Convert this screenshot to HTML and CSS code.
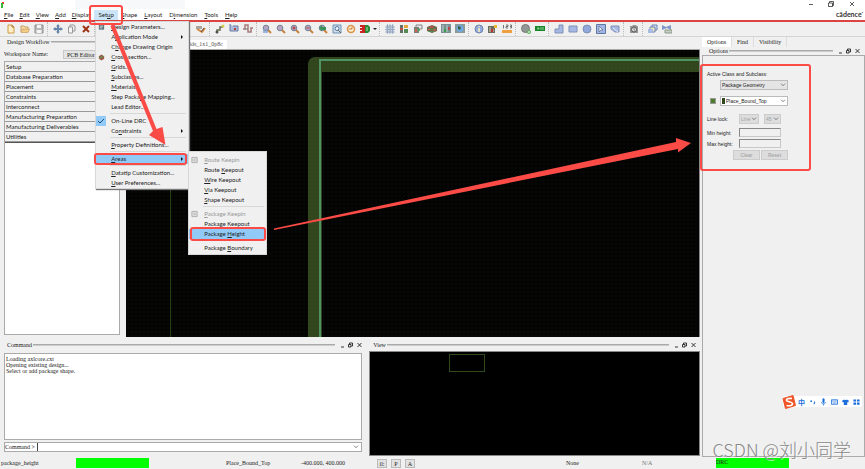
FILE: index.html
```html
<!DOCTYPE html>
<html lang="en">
<head>
<meta charset="utf-8">
<title>PCB Editor</title>
<link rel="stylesheet" href="styles.css">
</head>
<body>
<svg class="defs" aria-hidden="true">
  <symbol id="i-check" viewBox="0 0 8 8"><path d="M1 4l2 2 4-4" fill="none" stroke="#1f4e79"/></symbol>
  <symbol id="i-chev" viewBox="0 0 6 4"><path d="M1 .7l2 2 2-2" fill="none" stroke="#666" stroke-width=".8"/></symbol>
  <symbol id="i-win" viewBox="0 0 22 6"><path d="M1 5h3M9.500 2V1h3v3h-1" fill="none" stroke="#222" stroke-width=".9"/><path d="M8.500 2.500h2.500V5H8.500zM17.500 1l4 4M21.500 1l-4 4" fill="none" stroke="#222" stroke-width=".9"/></symbol>
  <symbol id="i-lens" viewBox="0 0 10 10"><path d="M6 6l3 3" stroke="#c8833b" stroke-width="2"/><circle cx="4" cy="4" r="2.800" fill="#b9a6c4" stroke="#75818f"/></symbol>
  <symbol id="i-keep" viewBox="0 0 8 8"><path d="M1 1h6v6H1z" fill="#ddd" stroke="#aaa"/><path d="M3 3h2v2H3z" fill="#bbb"/></symbol>
</svg>

<header>
  <div class="titlebar">
    <svg class="appmark" viewBox="0 0 4 8"><path d="M1 2h2v2H1z" fill="#e33"/><path d="M0 3h2v5H0z" fill="#3b3"/></svg>
    <span class="titleblur"></span>
    <svg class="wincontrols" viewBox="0 0 50 8"><path d="M2 4.500h4M22.500 3V1.500h4v4H25M21.500 3h4v3.500h-4zM43 2l4 4M47 2l-4 4" fill="none" stroke="#333" stroke-width=".8"/></svg>
  </div>
  <nav class="menubar">
    <button><u>F</u>ile</button><button><u>E</u>dit</button><button><u>V</u>iew</button><button><u>A</u>dd</button><button><u>D</u>isplay</button>
    <div class="menuhost">
      <button class="active">Set<u>u</u>p</button>
      <div class="popup setup">
        <button><svg class="mi" viewBox="0 0 8 8"><path d="M1 1h6v6H1z" fill="#577177"/><path d="M2 3h4M2 5h3" stroke="#d7e6e8"/></svg><u>D</u>esign Parameters...</button>
        <button>A<u>p</u>plication Mode<span class="arrow"></span></button>
        <button>C<u>h</u>ange Drawing Origin</button>
        <button><svg class="mi" viewBox="0 0 8 8"><path d="M1 3l3-2 3 2v3L4 8 1 6z" fill="#a25246"/><path d="M1 4l3 1 3-2M2 6l3-4" stroke="#5c9a5a" fill="none"/></svg><u>C</u>ross-section...</button>
        <button><u>G</u>rids...</button>
        <button><u>S</u>ubclasses...</button>
        <button><u>M</u>aterials...</button>
        <button>Step Packa<u>g</u>e Mapping...</button>
        <button>Lead Editor...</button>
        <hr>
        <button><svg class="mi checked"><use href="#i-check"/></svg>On-Line DRC</button>
        <button>Co<u>n</u>straints<span class="arrow"></span></button>
        <hr>
        <button><u>P</u>roperty Definitions...</button>
        <hr>
        <div class="subhost">
          <button class="hot marked"><u>A</u>reas<span class="arrow"></span></button>
          <div class="popup areas">
            <button disabled><svg class="mi"><use href="#i-keep"/></svg><u>R</u>oute Keepin</button>
            <button>Route <u>K</u>eepout</button>
            <button><u>W</u>ire Keepout</button>
            <button><u>V</u>ia Keepout</button>
            <button><u>S</u>hape Keepout</button>
            <hr>
            <button disabled><svg class="mi"><use href="#i-keep"/></svg><u>P</u>ackage Keepin</button>
            <button>P<u>a</u>ckage Keepout</button>
            <button class="hot marked">Package <u>H</u>eight</button>
            <hr>
            <button>Package <u>B</u>oundary</button>
          </div>
        </div>
        <hr>
        <button><u>D</u>atatip Customization...</button>
        <button><u>U</u>ser Preferences...</button>
        <svg class="menuarrow" viewBox="0 0 60 126"><path d="M14.500 3L18 1L60.500 106L66.500 104L69.500 122L53 112L57 108z" fill="#fa4b46"/></svg>
      </div>
    </div>
    <button><u>S</u>hape</button><button><u>L</u>ayout</button><button>D<u>i</u>mension</button><button><u>T</u>ools</button><button><u>H</u>elp</button>
    <span class="brand">cādence<sup>·</sup></span>
  </nav>
  <div class="toolbar">
    <div class="group">
      <svg viewBox="0 0 10 10"><path d="M2 1h4l2 2v6H2z" fill="#fff0c8" stroke="#cf9a45"/><path d="M6 1v2h2" fill="none" stroke="#a87535"/></svg>
      <svg viewBox="0 0 10 10"><path d="M1 8V2h3l1 1h3v2" fill="#f7dfad" stroke="#c79d60"/><path d="M1 8.500L2.500 5H9.500L8 8.500z" fill="#f3cc85" stroke="#c79d60" stroke-width=".7"/></svg>
      <svg viewBox="0 0 10 10"><path d="M1 1h8v8H1z" fill="#b9b9b9" stroke="#8f8f8f"/><path d="M3 1h4v3H3zM2.500 6h5v3h-5z" fill="#f4f4f4"/></svg>
    </div>
    <div class="group">
      <svg viewBox="0 0 10 10"><path d="M5 0l2 2.500H6V4h1.500V3L10 5 7.500 7V6H6v1.500h1L5 10 3 7.500h1V6H2.500v1L0 5l2.500-2v1H4V2.500H3z" fill="#6685a8"/></svg>
      <svg viewBox="0 0 10 10"><path d="M3 1h4l1 1v5H3z" fill="#eee" stroke="#999"/><path d="M1.500 3h4v6h-4z" fill="#f7f7f7" stroke="#999"/></svg>
      <svg viewBox="0 0 10 10"><path d="M2 2l6 6M8 2L2 8" stroke="#9c3414" stroke-width="2"/></svg>
    </div>
    <div class="group covered">
      <svg viewBox="0 0 10 10"><path d="M0 2h6v3H0z" fill="#a9a4a2"/><path d="M1 5l5 3 3-4" fill="none" stroke="#d28b43" stroke-width="2"/><path d="M5 8l3-4" stroke="#5a4c44"/></svg>
    </div>
    <div class="group">
      <svg viewBox="0 0 10 10"><path d="M2 8V6h3V3h3" fill="none" stroke="#676b50" stroke-width="1.500"/><circle cx="2" cy="8" r="1.500" fill="#4c5148"/><circle cx="8" cy="2" r="1.500" fill="#d5cc47"/></svg>
      <svg viewBox="0 0 10 10"><path d="M1 0v7h8V2H4" fill="#adbbdc" stroke="#6b7da3"/><path d="M5 4l2 2M7 4L5 6" stroke="#b74141"/></svg>
      <svg viewBox="0 0 10 10"><path d="M0 5h2V1h3v7h3V4h2" fill="none" stroke="#a57979" stroke-width="1.500"/><path d="M2 5h3" stroke="#777"/></svg>
    </div>
    <div class="group">
      <svg viewBox="0 0 10 10"><use href="#i-lens"/><path d="M1 5h5v4H1z" fill="#7f9ccd" opacity=".7"/></svg>
      <svg viewBox="0 0 10 10"><use href="#i-lens"/></svg>
      <svg viewBox="0 0 10 10"><use href="#i-lens"/><path d="M2.500 4h3M4 2.500v3" stroke="#b32929"/></svg>
      <svg viewBox="0 0 10 10"><use href="#i-lens"/><path d="M2.500 4h3" stroke="#a44"/></svg>
      <svg viewBox="0 0 10 10"><use href="#i-lens"/><path d="M1 4l3-3v2h4v3H4v1z" fill="#3b935c"/></svg>
      <svg viewBox="0 0 10 10"><path d="M1 1h8v8H1z" fill="#cbdced" stroke="#6f93b5"/><circle cx="5" cy="4.500" r="2" fill="#eef5fb" stroke="#54779d"/><path d="M6 6l3 3" stroke="#665"/></svg>
      <svg viewBox="0 0 10 10"><circle cx="5" cy="5" r="3.500" fill="#fff0d4" stroke="#d8924a" stroke-width="1.500"/><path d="M3 5h3V3" fill="none" stroke="#c4732c"/></svg>
      <svg viewBox="0 0 10 10"><path d="M0 1h5v8H0V7h2V6H0V4h2V3H0z" fill="#cc2424"/><path d="M5 1h3l2 2v4L8 9H5z" fill="#278a36"/><path d="M7 3v4" stroke="#b7ddb9"/></svg>
      <span class="caret"></span>
    </div>
    <div class="group">
      <svg viewBox="0 0 10 10"><path d="M1 1h8v8H1z" fill="#c4d0df"/><path d="M0 3h10M0 5.500h10M0 8h10M2.500 0v10M5 0v10M7.500 0v10" stroke="#8b9eb8" stroke-width=".7"/></svg>
      <svg viewBox="0 0 10 10"><path d="M1 1h3v8H1z" fill="#63706a"/><path d="M5 1h4v3H5z" fill="#e4a73d"/><path d="M5 5h4v4H5z" fill="#538b55"/><path d="M1 4h3v2H1z" fill="#c74e42"/></svg>
      <svg viewBox="0 0 10 10"><path d="M3 1h6v4H3z" fill="#e6e6e6" stroke="#858585"/><path d="M1 3h5v6H1z" fill="#788179"/><path d="M2 5h2v3H2z" fill="#c65"/><path d="M5 5h2v2H5z" fill="#5a5"/></svg>
      <svg viewBox="0 0 10 10"><path d="M0 3l5-2 5 2v4L5 9 0 7z" fill="#7b5b43"/><path d="M1 4l4 2 4-3M1 7l5 1 3-3" stroke="#4c985b" fill="none"/><path d="M3 3h3M6 6h3M1 5.500h2" stroke="#d7594e"/></svg>
      <svg viewBox="0 0 10 10"><path d="M0 0h10v9H0z" fill="#7c8f93"/><path d="M2 1v7M6 1v7" stroke="#b9d1d2"/><path d="M3 5h2v3H3z" fill="#3a9b4a"/><path d="M7 3h2v3H7z" fill="#b84444"/></svg>
      <svg viewBox="0 0 10 10"><path d="M0 0h10v9H0z" fill="#8b9a97"/><circle cx="5" cy="4.500" r="3.500" fill="#70a8df"/><path d="M3 2l3 1-1 3-2-1z" fill="#365d42"/></svg>
    </div>
    <div class="group">
      <svg viewBox="0 0 10 10"><circle cx="5" cy="5" r="4" fill="#91abe0" stroke="#7185aa"/><path d="M5 2v1M5 4v4" stroke="#fff5b7" stroke-width="1.500"/></svg>
      <svg viewBox="0 0 10 10"><path d="M0 2h7v7H0z" fill="#6b6d60"/><path d="M2 3v5M5 5v3" stroke="#d7d2b6"/><path d="M6 1h3v3H6z" fill="#ecb72f"/><path d="M3 5h2v3H3z" fill="#b33"/></svg>
      <svg viewBox="0 0 10 10"><path d="M0 6h10v3H0z" fill="#efa03e"/><path d="M1.500 1v3.500M4 1h2v1.500H4V4h2M8 1h1.500v3H8M8 2.500h1" fill="none" stroke="#555" stroke-width=".8"/></svg>
    </div>
    <div class="group">
      <svg viewBox="0 0 10 10"><circle cx="4.500" cy="4.500" r="4" fill="#929895" stroke="#777"/><circle cx="8" cy="8" r="2" fill="#5eb35e"/><path d="M7 8h2M8 7v2" stroke="#fff" stroke-width=".6"/></svg>
      <svg viewBox="0 0 10 10"><path d="M0 2h10v5H0z" fill="#168526"/><path d="M2 4h2v1H2M6 3v3M8 3v3" fill="none" stroke="#c7e7c7" stroke-width=".7"/></svg>
    </div>
    <div class="group">
      <svg viewBox="0 0 10 10"><path d="M1 5h4V1h4v8H1z" fill="#a5b8e3" stroke="#8090b6"/></svg>
      <svg viewBox="0 0 10 10"><path d="M1 2h8v6H1z" fill="#a5b8e3" stroke="#8090b6"/></svg>
      <svg viewBox="0 0 10 10"><circle cx="5" cy="5" r="4" fill="#91a8dc" stroke="#7e8eb2"/></svg>
      <svg viewBox="0 0 10 10"><path d="M.500.500h9v9h-9z" fill="#a0b7e5" stroke="#6377a3"/><path d="M3 2l4 4H5l-2 2z" fill="#e9effc" stroke="#5e6c87" stroke-width=".7"/></svg>
      <svg viewBox="0 0 10 10"><path d="M1 2h8v6H5L1 5z" fill="#a5b8e3" stroke="#8090b6"/><path d="M3 4l5 4" stroke="#e9eef9"/></svg>
    </div>
    <div class="group">
      <svg viewBox="0 0 10 10"><path d="M1 2h2l1-1h3l1 1h1v7H1z" fill="#999"/><circle cx="5" cy="5.500" r="2.500" fill="#ddd" stroke="#555"/><path d="M5 4v2h1" stroke="#555" fill="none" stroke-width=".6"/></svg>
    </div>
    <div class="group">
      <svg viewBox="0 0 10 10"><path d="M4 1h5v5H4z" fill="#d7e1f5" stroke="#6c82b0"/><path d="M2 3h5v5H2z" fill="#f0e9ba" stroke="#6c82b0"/><path d="M0 5h5v4H0z" fill="#a6bae4"/></svg>
      <svg viewBox="0 0 10 10"><path d="M0 1l4 2 5-2v5L5 4 0 6z" fill="#8097c9"/><path d="M3 6h7v3H3z" fill="#c5cfbf" stroke="#8b998b"/></svg>
    </div>
  </div>
</header>

<main>
  <div class="workarea">
    <div class="upper">
      <aside class="workflow">
        <div class="docktitle"><span>Design Workflow</span><i></i></div>
        <div class="workspace"><label for="ws">Workspace Name:</label><select id="ws"><option>PCB Editor</option></select></div>
        <div class="steps">
          <ul><li>Setup</li><li>Database Preparation</li><li>Placement</li><li>Constraints</li><li>Interconnect</li><li>Manufacturing Preparation</li><li>Manufacturing Deliverables</li><li>Utilities</li></ul>
        </div>
      </aside>
      <section class="design">
        <div class="filetabs"><span>6ds_1x1_0p8c</span></div>
        <div class="canvas">
          <svg class="board" aria-hidden="true">
            <rect x="182" y="7" width="4000" height="4000" rx="7" fill="#31461d"/>
            <rect x="194" y="10" width="4000" height="4000" fill="#31461d" stroke="#4f9365" stroke-width="2"/>
            <rect x="196" y="22" width="4000" height="4000" fill="#020302"/>
            <path d="M44.500 120v4000" stroke="#263f14"/>
          </svg>
          <svg class="longarrow" viewBox="0 0 416 92" preserveAspectRatio="none"><path d="M0 90.500L401 4V0L416 5L403 14.500V11L0 92z" fill="#fa4b46"/></svg>
        </div>
      </section>
    </div>
    <div class="lower">
      <section class="command">
        <div class="docktitle"><span>Command</span><i></i><svg class="dockbtns"><use href="#i-win"/></svg></div>
        <div class="log">Loading axlcore.cxt<br>Opening existing design...<br>Select or add package shape.</div>
        <div class="prompt"><label for="cmd">Command &gt;</label><input id="cmd"><svg class="chev"><use href="#i-chev"/></svg></div>
      </section>
      <section class="view">
        <div class="docktitle"><span>View</span><i></i><svg class="dockbtns"><use href="#i-win"/></svg></div>
        <div class="mini"><div class="outline"></div></div>
      </section>
    </div>
  </div>
  <aside class="side">
    <div class="tabs"><button class="on">Options</button><button>Find</button><button>Visibility</button></div>
    <div class="docktitle"><span>Options</span><i></i><svg class="dockbtns"><use href="#i-win"/></svg></div>
    <div class="panel">
      <form class="options">
        <label for="cls">Active Class and Subclass:</label>
        <div class="line indent"><span class="pick wide"><select id="cls"><option>Package Geometry</option></select><svg class="chev"><use href="#i-chev"/></svg></span></div>
        <div class="line sub"><button type="button" class="swatch" aria-label="Color"></button><span class="pick white"><b></b><select aria-label="Subclass"><option>Place_Bound_Top</option></select><svg class="chev"><use href="#i-chev"/></svg></span></div>
        <div class="line lock"><label for="lk">Line lock:</label><span class="pick dim"><select id="lk" disabled><option>Line</option></select><svg class="chev"><use href="#i-chev"/></svg></span><span class="pick dim angle"><select disabled aria-label="Angle"><option>45</option></select><svg class="chev"><use href="#i-chev"/></svg></span></div>
        <div class="line"><label for="mn">Min height:</label><input id="mn"></div>
        <div class="line"><label for="mx">Max height:</label><input id="mx"></div>
        <div class="actions"><button type="button" disabled>Clear</button><button type="button" disabled>Reset</button></div>
      </form>
      <div class="ime">
        <svg class="sogou" viewBox="0 0 14 14"><path d="M1 3.500L11 .500 13.500 10.500 3.500 13.500z" fill="#ee5428" stroke="#ee5428" stroke-linejoin="round"/><path d="M10 3.500C6 3 4 4 4.500 5.500S10 6.500 10.500 8.500 7.500 11 4.500 10.500" fill="none" stroke="#fff" stroke-width="1.600"/></svg>
        <span>中</span>
        <svg viewBox="0 0 8 8"><circle cx="2.500" cy="3" r="1" fill="#1b6fdc"/><path d="M6 3.500c1 1 .500 2-.700 3" fill="none" stroke="#1b6fdc" stroke-width="1.200"/></svg>
        <svg viewBox="0 0 8 8"><path d="M4 1v3" stroke="#1b6fdc" stroke-width="2.400" stroke-linecap="round"/><path d="M1.500 4c0 3 5 3 5 0M4 6v2" fill="none" stroke="#1b6fdc" stroke-width=".8"/></svg>
        <svg viewBox="0 0 8 8"><path d="M.500 1.500h7v5h-7z" fill="none" stroke="#1b6fdc"/><path d="M1.500 3h5M2 5h4" stroke="#1b6fdc" stroke-dasharray="1 .5"/></svg>
        <svg viewBox="0 0 8 8"><path d="M2.500 1c1 1 2 1 3 0L8 2.500 7 4.500 6 4v3.500H2V4l-1 .500-1-2z" fill="#1b6fdc"/></svg>
        <svg viewBox="0 0 8 8"><path d="M.500 1h3v2.500h-3zM4.500 1h3v2.500h-3zM.500 4.500h3V7h-3zM4.500 4.500h3V7h-3z" fill="#1b6fdc"/></svg>
      </div>
    </div>
  </aside>
</main>

<footer>
  <span class="c1">package_height</span><span class="bar"></span><span class="c2">Place_Bound_Top</span><span class="c3">-400.000, 400.000</span>
  <span class="modes"><button>il:</button><button>P</button><button>A</button></span>
  <span class="c4">None</span><span class="c5">N/A</span><span class="bar drc">DRC</span>
</footer>
<div class="watermark">CSDN @刘小同学</div>
</body>
</html>
```
FILE: styles.css
```css
* { box-sizing: border-box; }
body {
  margin: 0;
  min-height: 100vh;
  display: flex;
  flex-direction: column;
  position: relative;
  overflow: hidden;
  background: #f0f0f0;
  color: #222;
  font: 6px/8px "Liberation Serif", serif;
}
button, input, select {
  font: inherit;
  color: inherit;
  margin: 0;
  padding: 0;
  border: 0;
  background: none;
  appearance: none;
}
.defs { position: absolute; width: 0; height: 0; }

/* Title and menus */
.titlebar { display: flex; height: 10px; background: #fff; padding: 0 8px 0 1px; }
.appmark { width: 4px; height: 8px; }
.titleblur { width: 110px; height: 9px; margin-left: 70px; background: #f7f8f9; }
.wincontrols { width: 50px; height: 8px; margin-left: auto; }
.menubar {
  display: flex;
  height: 12px;
  padding-left: 1px;
  background: #fff;
  border-bottom: 2px solid #dc4442;
  font: 6px/10px Lato, sans-serif;
}
.menubar > button { padding: 0 3px; }
.menuhost ~ button { padding-right: 4px; }
.menuhost { position: relative; }
.menuhost > .active {
  position: relative;
  width: 24px;
  height: 10px;
  background: #cce4f7;
}
.menuhost > .active::after {
  content: "";
  position: absolute;
  z-index: 6;
  inset: -5px;
  border: 2px solid #fa4b46;
  border-radius: 3px;
}
.brand { margin-left: auto; padding-right: 2px; color: #333; font: bold 7px/9px Lato, sans-serif; }
.brand sup { line-height: 0; font-size: 5px; }

.popup {
  position: absolute;
  background: #f0f0f0;
  border: 1px solid #d8d8d8;
  box-shadow: 1px 1px 1px #777;
  color: #222;
}
.popup button {
  display: block;
  position: relative;
  width: 100%;
  height: 10px;
  padding-left: 15px;
  text-align: left;
  white-space: nowrap;
}
.popup button:disabled { color: #999; }
.popup hr { height: 1px; margin: 1px 2px 2px 14px; border: 0; background: #d8d8d8; }
.setup { z-index: 4; left: 1px; top: 11px; width: 94px; }
.areas { left: 92px; top: -3px; width: 79px; padding: 3px 0 1px; box-shadow: none; }
.subhost { position: relative; }
.popup .hot { background: #91c9f7; }
.popup .marked::after {
  content: "";
  position: absolute;
  inset: -1px 1px -1px -2px;
  border: 2px solid #fa4b46;
  border-radius: 3px;
}
.areas .marked::after { inset: -2px 0 -2px 1px; }
.mi { position: absolute; left: 2px; top: 1px; width: 7px; height: 8px; }
.mi.checked { left: 0; top: 0; width: 10px; height: 10px; padding: 1px; background: #91c9f7; }
.arrow {
  position: absolute;
  right: 5px;
  top: 3px;
  border: 2px solid transparent;
  border-left-color: #111;
  border-right: 0;
}
.menuarrow { position: absolute; left: 0; top: 1px; width: 60px; height: 126px; overflow: visible; }

/* Toolbar */
.toolbar {
  display: flex;
  height: 15px;
  padding-left: 4px;
  border-bottom: 1px solid #d4d4d4;
}
.group { display: flex; align-items: center; }
.group + .group { margin-left: 1px; padding-left: 3px; border-left: 1px dotted #bbb; }
.group > svg { width: 14px; height: 10px; padding: 0 2px; }
.group + .covered { padding-left: 99px; }
.caret { width: 4px; margin: 0 1px; border: 2px solid transparent; border-top-color: #222; border-bottom: 0; }

/* Docked areas */
main { display: flex; flex: 1; }
.workarea { display: flex; flex-direction: column; flex: 1; min-width: 0; }
.upper { display: flex; flex: 1; }
.docktitle { display: flex; align-items: center; height: 10px; gap: 1px; padding: 0 7px; }
.docktitle i { flex: 1; height: 2px; border-top: 1px solid #aaa; border-bottom: 1px solid #ccc; }
.dockbtns { width: 22px; height: 6px; margin-left: 4px; }
.workflow { display: flex; flex-direction: column; width: 126px; padding: 0 6px 2px 4px; }
.workflow .docktitle { padding: 0 3px; }
.workspace { display: flex; align-items: center; justify-content: space-between; height: 14px; }
.workspace select { width: 57px; height: 9px; padding-left: 3px; border: 1px solid #c8c8c8; background: #e4e4e4; }
.steps { flex: 1; background: #fff; border: 1px solid #aaa; }
.steps ul { margin: 0; padding: 0; list-style: none; background: #f0f0f0; border-bottom: 1px solid #555; }
.steps li { height: 10px; padding-left: 1px; border-bottom: 1px solid #999; font: 6px/9px Lato, sans-serif; }
.design { display: flex; flex-direction: column; flex: 1; min-width: 0; }
.filetabs { display: flex; height: 13px; padding-top: 3px; border-bottom: 1px solid #aaa; }
.filetabs span { width: 101px; padding-right: 4px; background: #fff; text-align: right; color: #555; }
.canvas {
  position: relative;
  flex: 1;
  border-right: 1px solid #888;
  background-color: #020302;
}
.canvas::after {
  content: "";
  position: absolute;
  inset: 0;
  background: radial-gradient(circle, #6575350d 1px, transparent 1px) 0 0 / 4px 4px;
}
.board { position: absolute; width: 100%; height: 100%; }
.longarrow { position: absolute; z-index: 2; left: 148px; top: 88px; width: calc(100% - 156px); height: 92px; }

.lower { display: grid; grid-template-columns: 23fr 21fr; gap: 7px; height: 120px; padding: 3px 0 1px; }
.command { display: flex; flex-direction: column; padding: 0 0 4px 4px; }
.command .docktitle { padding: 0 0 0 3px; }
.log { flex: 1; margin: 3px 0 2px; padding: 2px 1px; border: 1px solid #aaa; background: #fff; line-height: 6px; }
.prompt { display: flex; align-items: center; height: 10px; border: 1px solid #aaa; background: #fff; }
.prompt input { flex: 1; height: 8px; margin-left: 2px; border-left: 1px solid #444; }
.chev { width: 6px; height: 4px; margin-right: 2px; }
.view { display: flex; flex-direction: column; }
.view .docktitle { padding: 0 4px; }
.mini { flex: 1; margin-top: 1px; padding: 2px 0 0 79px; border: 1px solid #888; background: #000; }
.outline { width: 36px; height: 18px; border: 1px solid #2e4a1b; }

/* Options dock */
.side { display: flex; flex-direction: column; width: 165px; padding-left: 2px; }
.tabs { display: flex; height: 10px; }
.tabs button { padding: 0 5px; border-right: 1px solid #ddd; }
.tabs .on { background: #fff; }
.side .docktitle { height: 8px; padding-right: 5px; }
.panel { position: relative; flex: 1; border: 1px solid #aaa; }
.options {
  width: 111px;
  height: 107px;
  margin: 8px 0 0 -3px;
  padding: 4px 4px 0 5px;
  border: 2px solid #fa4b46;
  border-radius: 3px;
  font: 5px/8px "Liberation Sans", sans-serif;
}
.options > label { display: block; }
.line { display: flex; align-items: center; height: 11px; }
.line label { width: 32px; }
.indent { padding-left: 13px; height: 13px; }
.sub { height: 19px; padding-left: 3px; gap: 4px; }
.pick { display: flex; align-items: center; height: 10px; border: 1px solid #bbb; background: #e4e4e4; }
.pick select { flex: 1; min-width: 0; height: 8px; padding-left: 1px; }
.pick .chev { margin-right: 1px; }
.wide, .white { width: 68px; }
.white { background: #fff; }
.white b { width: 3px; height: 6px; margin-left: 1px; background: #31461d; }
.swatch { width: 6px; height: 6px; border: 1px solid #999; background: #4c7b2a; }
.lock { height: 17px; }
.dim { width: 20px; border-color: #ccc; background: #ddd; color: #888; }
.angle { width: 17px; margin-left: 5px; }
.line input { width: 42px; height: 9px; border: 1px solid #c8c8c8; border-top-color: #888; border-left-color: #888; }
.actions { display: flex; gap: 1px; padding: 1px 0 0 26px; }
.actions button { width: 27px; height: 10px; border: 1px solid #ccc; background: #ddd; color: #999; }
.ime {
  position: absolute;
  right: 2px;
  bottom: 49px;
  display: flex;
  align-items: center;
  gap: 4px;
  height: 11px;
  background: #fff;
  padding-right: 2px;
  border-radius: 2px;
  color: #1b6fdc;
}
.ime > span { font: bold 7px/10px "Noto Sans CJK SC", sans-serif; }
.ime svg { width: 7px; height: 8px; }
.ime .sogou { width: 14px; height: 14px; margin-left: -1px; margin-right: -2px; }

/* Status bar */
footer { display: flex; align-items: center; height: 12px; padding-left: 1px; }
.c1 { width: 75px; }
.bar { width: 73px; height: 10px; background: #0f0; }
.c2 { width: 75px; margin-left: 77px; }
.c3 { width: 76px; }
.modes { display: flex; gap: 4px; flex: 1; }
.modes button { width: 10px; height: 9px; border: 1px solid #bbb; background: #e2e2e2; }
.c4 { width: 76px; }
.c5 { width: 74px; color: #777; }
.drc { margin-right: 76px; }
.watermark {
  position: absolute;
  right: 14px;
  bottom: 7px;
  color: #888;
  font: 300 18px/25px "Noto Sans CJK SC", sans-serif;
  text-shadow: 1px 1px 0 #fff8;
}
```
